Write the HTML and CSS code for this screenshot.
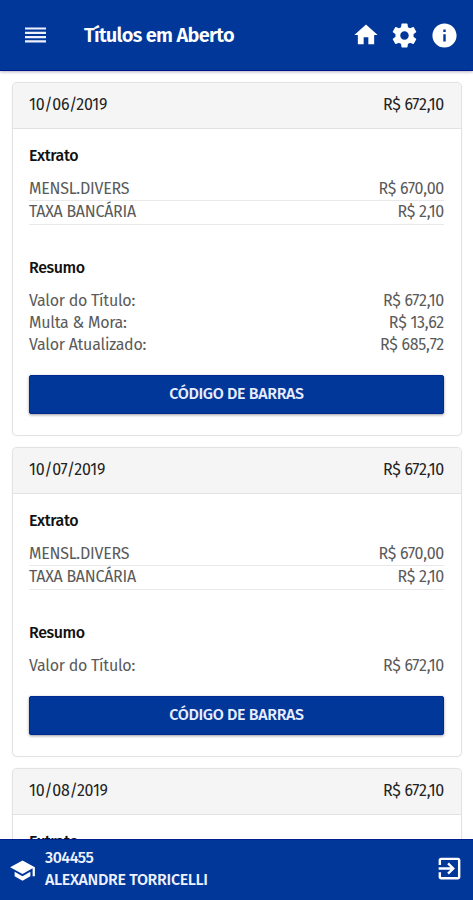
FILE: index.html
```
<!DOCTYPE html>
<html lang="pt-BR">
<head>
<meta charset="UTF-8">
<meta name="viewport" content="width=device-width, initial-scale=1.0">
<title>Títulos em Aberto</title>
<link rel="stylesheet" href="styles.css">
</head>
<body>
<header class="topbar">
    <svg class="menu" viewBox="0 0 21 16"><path d="M0 1.5h21M0 5.8h21M0 10.1h21M0 14.4h21"/></svg>
    <h1>Títulos em Aberto</h1>
    <nav>
        <svg class="home" viewBox="0 0 24 24"><path d="M10 20v-6h4v6h5v-8h3L12 3 2 12h3v8z"/></svg>
        <svg class="gear" viewBox="0 0 24 24"><path d="M19.43 12.98c.04-.32.07-.64.07-.98s-.03-.66-.07-.98l2.11-1.65c.19-.15.24-.42.12-.64l-2-3.46c-.12-.22-.39-.3-.61-.22l-2.49 1c-.52-.4-1.08-.73-1.69-.98l-.38-2.65C14.46 2.18 14.25 2 14 2h-4c-.25 0-.46.18-.49.42l-.38 2.65c-.61.25-1.17.59-1.69.98l-2.49-1c-.23-.09-.49 0-.61.22l-2 3.46c-.13.22-.07.49.12.64l2.11 1.65c-.04.32-.07.65-.07.98s.03.66.07.98l-2.11 1.65c-.19.15-.24.42-.12.64l2 3.46c.12.22.39.3.61.22l2.49-1c.52.4 1.08.73 1.69.98l.38 2.65c.03.24.24.42.49.42h4c.25 0 .46-.18.49-.42l.38-2.65c.61-.25 1.17-.59 1.69-.98l2.49 1c.23.09.49 0 .61-.22l2-3.46c.12-.22.07-.49-.12-.64l-2.11-1.65zM12 15.5c-1.93 0-3.5-1.57-3.5-3.5s1.57-3.5 3.5-3.5 3.5 1.57 3.5 3.5-1.57 3.5-3.5 3.5z"/></svg>
        <svg class="info" viewBox="0 0 24 24"><path d="M12 2C6.48 2 2 6.48 2 12s4.48 10 10 10 10-4.48 10-10S17.52 2 12 2zm1 15h-2v-6h2v6zm0-8h-2V7h2v2z"/></svg>
    </nav>
</header>

<main>
    <section class="card">
        <div class="card-head"><span>10/06/2019</span><span>R$ 672,10</span></div>
        <div class="card-body">
            <h2>Extrato</h2>
            <div class="item"><span>MENSL.DIVERS</span><span>R$ 670,00</span></div>
            <div class="item"><span>TAXA BANCÁRIA</span><span>R$ 2,10</span></div>
            <h2 class="resumo">Resumo</h2>
            <div class="row"><span>Valor do Título:</span><span>R$ 672,10</span></div>
            <div class="row"><span>Multa &amp; Mora:</span><span>R$ 13,62</span></div>
            <div class="row"><span>Valor Atualizado:</span><span>R$ 685,72</span></div>
            <button>CÓDIGO DE BARRAS</button>
        </div>
    </section>

    <section class="card">
        <div class="card-head"><span>10/07/2019</span><span>R$ 672,10</span></div>
        <div class="card-body">
            <h2>Extrato</h2>
            <div class="item"><span>MENSL.DIVERS</span><span>R$ 670,00</span></div>
            <div class="item"><span>TAXA BANCÁRIA</span><span>R$ 2,10</span></div>
            <h2 class="resumo">Resumo</h2>
            <div class="row"><span>Valor do Título:</span><span>R$ 672,10</span></div>
            <button>CÓDIGO DE BARRAS</button>
        </div>
    </section>

    <section class="card">
        <div class="card-head"><span>10/08/2019</span><span>R$ 672,10</span></div>
        <div class="card-body">
            <h2>Extrato</h2>
        </div>
    </section>
</main>

<footer class="userbar">
    <svg class="school" viewBox="0 0 24 24"><path d="M5 13.18v4L12 21l7-3.82v-4L12 17l-7-3.82zM12 3L1 9l11 6 9-4.91V17h2V9L12 3z"/></svg>
    <div class="user">
        <div class="code">304455</div>
        <div>ALEXANDRE TORRICELLI</div>
    </div>
    <svg class="exit" viewBox="0 0 24 24"><path d="M10.09 15.59L11.5 17l5-5-5-5-1.41 1.41L12.67 11H3v2h9.67l-2.58 2.59zM19 3H5c-1.11 0-2 .9-2 2v4h2V5h14v14H5v-4H3v4c0 1.1.89 2 2 2h14c1.1 0 2-.9 2-2V5c0-1.1-.9-2-2-2z"/></svg>
</footer>
</body>
</html>
```
FILE: styles.css
```
* {
    box-sizing: border-box;
}
body {
    margin: 0;
    height: 900px;
    display: flex;
    flex-direction: column;
    overflow: hidden;
    background-color: #fff;
    color: #5a5a5a;
    font-family: "Fira Sans", "Noto Sans", sans-serif;
    font-size: 16px;
    letter-spacing: -0.25px;
}
h1, h2 {
    margin: 0;
}
svg {
    fill: #fff;
    flex-shrink: 0;
}
.topbar {
    height: 71px;
    flex-shrink: 0;
    display: flex;
    align-items: center;
    padding: 0 14px 0 25px;
    background-color: #003799;
    border-bottom: 1px solid #00158a;
    box-shadow: 0 1px 3px rgba(0, 0, 60, 0.3);
    z-index: 1;
}
.topbar h1 {
    margin-left: 38px;
    color: #fff;
    font-size: 20px;
    font-weight: 600;
    letter-spacing: -0.7px;
    white-space: nowrap;
}
.menu {
    width: 21px;
    height: 16px;
    stroke: #eef1ff;
    stroke-width: 2.2;
}
.topbar nav {
    display: flex;
    align-items: center;
    margin-left: auto;
    gap: 11px;
}
.home {
    width: 28px;
    height: 28px;
    margin-right: -1px;
}
.gear, .info {
    width: 29px;
    height: 29px;
}
main {
    flex: 1;
    min-height: 0;
    overflow: hidden;
    padding: 11px 11px 0 12px;
}
.card {
    margin-bottom: 11px;
    border: 1px solid #e2e2e2;
    border-radius: 5px;
    overflow: hidden;
    box-shadow: 0 0 1px rgba(0, 0, 0, 0.15);
}
.card-head {
    display: flex;
    justify-content: space-between;
    align-items: center;
    height: 46px;
    padding: 0 17px 2px 16px;
    background-color: #f5f5f5;
    border-bottom: 1px solid #e2e2e2;
    color: #222;
}
.card-body {
    padding: 17px 17px 21px 16px;
}
.card-body h2 {
    margin-bottom: 11px;
    color: #111;
    font-size: 16px;
    font-weight: 500;
    line-height: 20px;
    letter-spacing: -0.4px;
}
.card-body .resumo {
    margin: 33px 0 12px;
}
.item, .row {
    display: flex;
    justify-content: space-between;
    line-height: 22px;
}
.item {
    height: 24px;
    line-height: 23px;
    border-bottom: 1px solid #e9e9e9;
}
.item + .item {
    line-height: 21px;
}
button {
    display: block;
    width: 100%;
    height: 39px;
    margin-top: 19px;
    padding: 0 0 2px;
    border: 1px solid #002a92;
    border-radius: 2px;
    background-color: #003799;
    box-shadow: 0 1px 3px rgba(0, 0, 0, 0.4);
    color: #e8edff;
    font-family: inherit;
    font-size: 16px;
    font-weight: 500;
    letter-spacing: -0.35px;
}
.userbar {
    height: 61px;
    flex-shrink: 0;
    display: flex;
    align-items: center;
    padding: 0 9px;
    background-color: #003799;
    border-top: 1px solid #001d8f;
}
.school {
    width: 27px;
    height: 27px;
}
.user {
    margin-left: 9px;
    color: #eef1ff;
    font-weight: 500;
    line-height: 22px;
    padding-bottom: 2px;
    letter-spacing: -0.33px;
}
.code {
    letter-spacing: -0.5px;
}
.exit {
    width: 29px;
    height: 29px;
    margin: 0 0 3px auto;
}
```
